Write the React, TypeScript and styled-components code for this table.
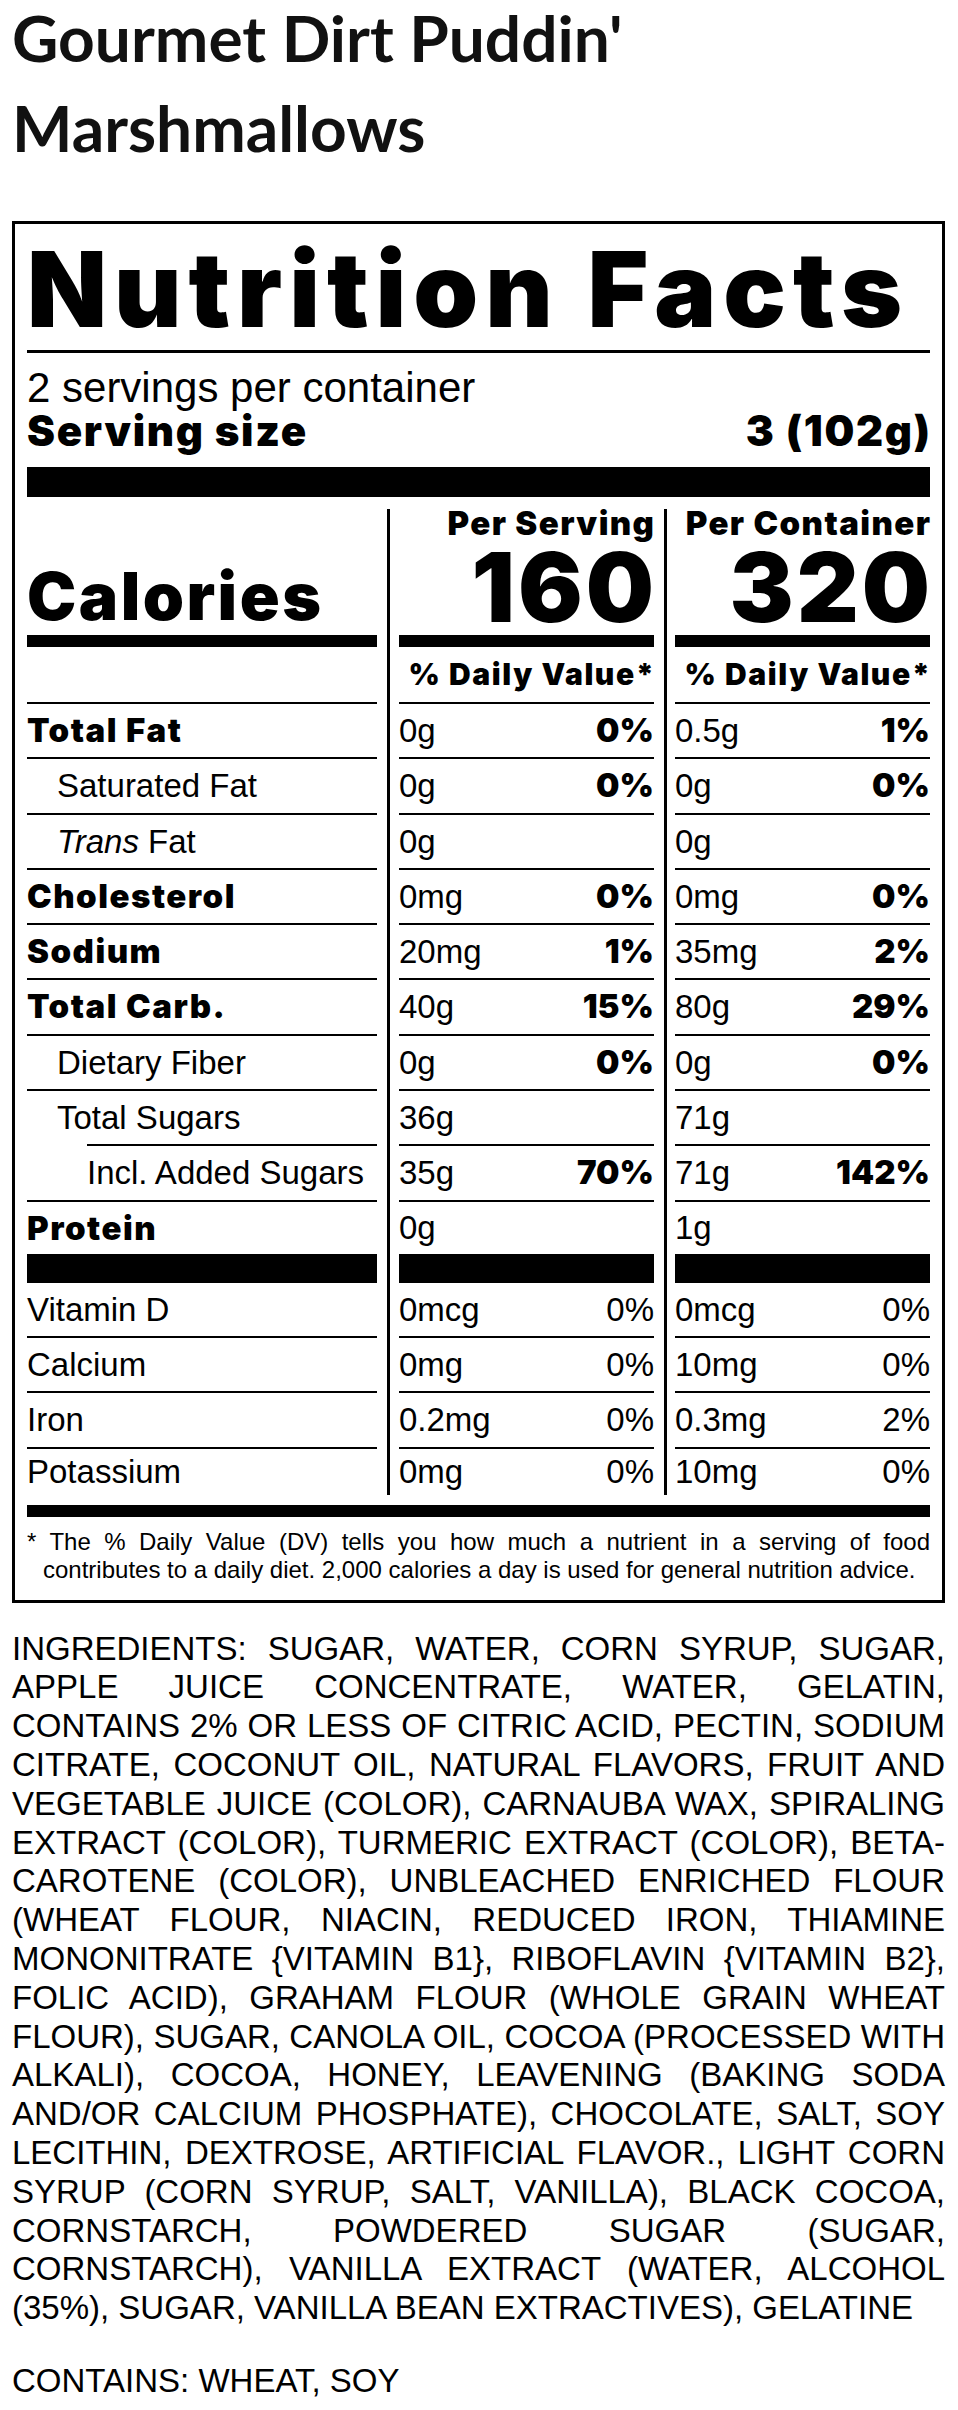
import React from 'react';
import styled, { createGlobalStyle } from 'styled-components';

const HEAVY = `"Inter", "Roboto", "Liberation Sans", Arial, sans-serif`;
const REGULAR = `"Liberation Sans", Arial, Helvetica, sans-serif`;

const GlobalStyle = createGlobalStyle`
  html, body { margin: 0; padding: 0; background: #fff; }
  body { font-family: ${REGULAR}; color: #000; }
`;

const Page = styled.main`
  padding: 0 13px 0 12px;
`;

const Title = styled.h1`
  margin: -7px 0 48px;
  font-family: Lato, "Liberation Sans", sans-serif;
  font-weight: 700;
  font-size: 64px;
  line-height: 90px;
  color: #111;
`;

const LabelBox = styled.section`
  border: 3px solid #000;
  padding: 0 12px 16px;
`;

const Heading = styled.h2`
  margin: 0;
  padding-top: 4px;
  font-family: ${HEAVY};
  font-weight: 900;
  font-size: 104px;
  line-height: 122px;
  letter-spacing: 7px;
  white-space: nowrap;
  border-bottom: 3px solid #000;
`;

const Servings = styled.p`
  margin: 14px 0 0;
  font-size: 42px;
  line-height: 42px;
`;

const ServingSize = styled.div`
  display: flex;
  justify-content: space-between;
  font-family: ${HEAVY};
  font-weight: 900;
  font-size: 42px;
  line-height: 44px;
  letter-spacing: 1.7px;
  margin-right: -1.7px;
`;

const Bar = styled.div<{ $h: number; $mt?: number }>`
  height: ${(p) => p.$h}px;
  margin-top: ${(p) => p.$mt ?? 0}px;
  background: #000;
`;

const Table = styled.div`
  margin-top: 12px;
`;

const Row = styled.div`
  display: grid;
  grid-template-columns: 360px 277px 1fr;
`;

const Cell = styled.div<{ $col: 0 | 1 | 2 }>`
  display: flex;
  flex-direction: column;
  padding: ${(p) => (p.$col === 0 ? '0 10px 0 0' : p.$col === 1 ? '0 10px 0 9px' : '0 0 0 8px')};
  border-left: ${(p) => (p.$col === 0 ? 'none' : '3px solid #000')};
`;

const HeaderCell = styled(Cell)`
  height: 138px;
  justify-content: flex-end;
`;

const Spacer = styled.div`
  flex: 1;
`;

const PerLabel = styled.div`
  font-family: ${HEAVY};
  font-weight: 900;
  font-size: 33px;
  line-height: 28px;
  letter-spacing: 1.4px;
  margin-right: -1.4px;
  text-align: right;
  white-space: nowrap;
`;

const BigNumber = styled.div`
  font-family: ${HEAVY};
  font-weight: 900;
  font-size: 96px;
  line-height: 96px;
  letter-spacing: 3px;
  margin-right: -3px;
  text-align: right;
`;

const CaloriesLabel = styled.div`
  font-family: ${HEAVY};
  font-weight: 900;
  font-size: 66px;
  line-height: 78px;
  letter-spacing: 2.5px;
`;

const CellBody = styled.div<{ $h: number; $indent?: number }>`
  height: ${(p) => p.$h}px;
  display: flex;
  align-items: center;
  justify-content: space-between;
  padding-left: ${(p) => p.$indent ?? 0}px;
  line-height: ${(p) => p.$h}px;
  white-space: nowrap;
`;

const DVText = styled.span`
  margin-left: auto;
  margin-right: -1.6px;
  font-family: ${HEAVY};
  font-weight: 900;
  font-size: 30px;
  letter-spacing: 1.6px;
`;

const Text = styled.span<{ $bold?: boolean; $spaced?: boolean }>`
  font-family: ${(p) => (p.$bold ? HEAVY : REGULAR)};
  font-weight: ${(p) => (p.$bold ? 900 : 400)};
  font-size: 33px;
  letter-spacing: ${(p) => (p.$spaced ? '1.5px' : 'normal')};
`;

const Rule = styled.div<{ $indent?: number }>`
  height: 2px;
  margin-left: ${(p) => p.$indent ?? 0}px;
  background: #000;
`;

const Footnote = styled.p`
  margin: 11px 0 0;
  padding-left: 16px;
  text-indent: -16px;
  font-size: 24px;
  line-height: 28px;
  text-align: justify;
`;

const Ingredients = styled.p`
  margin: 27px 0 0;
  font-size: 33px;
  line-height: 38.8px;
  text-align: justify;
`;

const Contains = styled.p`
  margin: 34px 0 0;
  font-size: 33px;
  line-height: 38.8px;
`;

type Amount = [string, string];
type Nutrient = {
  label: React.ReactNode;
  bold?: boolean;
  indent?: number;
  lineIndent?: number;
  s: Amount;
  c: Amount;
  h?: number;
  noLine?: boolean;
};

const macros: Nutrient[] = [
  { label: 'Total Fat', bold: true, s: ['0g', '0%'], c: ['0.5g', '1%'] },
  { label: 'Saturated Fat', indent: 30, s: ['0g', '0%'], c: ['0g', '0%'] },
  { label: <><i>Trans</i> Fat</>, indent: 30, s: ['0g', ''], c: ['0g', ''] },
  { label: 'Cholesterol', bold: true, s: ['0mg', '0%'], c: ['0mg', '0%'] },
  { label: 'Sodium', bold: true, s: ['20mg', '1%'], c: ['35mg', '2%'] },
  { label: 'Total Carb.', bold: true, s: ['40g', '15%'], c: ['80g', '29%'] },
  { label: 'Dietary Fiber', indent: 30, s: ['0g', '0%'], c: ['0g', '0%'] },
  { label: 'Total Sugars', indent: 30, lineIndent: 60, s: ['36g', ''], c: ['71g', ''] },
  { label: 'Incl. Added Sugars', indent: 60, s: ['35g', '70%'], c: ['71g', '142%'] },
  { label: 'Protein', bold: true, s: ['0g', ''], c: ['1g', ''], h: 52, noLine: true },
];

const vitamins: Nutrient[] = [
  { label: 'Vitamin D', s: ['0mcg', '0%'], c: ['0mcg', '0%'] },
  { label: 'Calcium', s: ['0mg', '0%'], c: ['10mg', '0%'] },
  { label: 'Iron', s: ['0.2mg', '0%'], c: ['0.3mg', '2%'] },
  { label: 'Potassium', s: ['0mg', '0%'], c: ['10mg', '0%'], h: 46, noLine: true },
];

const INGREDIENTS =
  'INGREDIENTS: SUGAR, WATER, CORN SYRUP, SUGAR, APPLE JUICE CONCENTRATE, WATER, GELATIN, CONTAINS 2% OR ' +
  'LESS OF CITRIC ACID, PECTIN, SODIUM CITRATE, COCONUT OIL, NATURAL FLAVORS, FRUIT AND VEGETABLE JUICE ' +
  '(COLOR), CARNAUBA WAX, SPIRALING EXTRACT (COLOR), TURMERIC EXTRACT (COLOR), BETA-CAROTENE (COLOR), ' +
  'UNBLEACHED ENRICHED FLOUR (WHEAT FLOUR, NIACIN, REDUCED IRON, THIAMINE MONONITRATE {VITAMIN B1}, ' +
  'RIBOFLAVIN {VITAMIN B2}, FOLIC ACID), GRAHAM FLOUR (WHOLE GRAIN WHEAT FLOUR), SUGAR, CANOLA OIL, ' +
  'COCOA (PROCESSED WITH ALKALI), COCOA, HONEY, LEAVENING (BAKING SODA AND/OR CALCIUM PHOSPHATE), ' +
  'CHOCOLATE, SALT, SOY LECITHIN, DEXTROSE, ARTIFICIAL FLAVOR., LIGHT CORN SYRUP (CORN SYRUP, SALT, ' +
  'VANILLA), BLACK COCOA, CORNSTARCH, POWDERED SUGAR (SUGAR, CORNSTARCH), VANILLA EXTRACT (WATER, ALCOHOL ' +
  '(35%), SUGAR, VANILLA BEAN EXTRACTIVES), GELATINE';

const FOOTNOTE =
  '* The % Daily Value (DV) tells you how much a nutrient in a serving of food contributes to a daily ' +
  'diet. 2,000 calories a day is used for general nutrition advice.';

function NutrientRow({ n, boldPct }: { n: Nutrient; boldPct: boolean }) {
  const h = n.h ?? 53.3;
  return (
    <Row>
      <Cell $col={0}>
        <CellBody $h={h} $indent={n.indent}>
          <Text $bold={n.bold} $spaced={n.bold}>
            {n.label}
          </Text>
        </CellBody>
        {!n.noLine && <Rule $indent={n.lineIndent} />}
      </Cell>
      {[n.s, n.c].map((a, i) => (
        <Cell $col={(i + 1) as 1 | 2} key={i}>
          <CellBody $h={h}>
            <Text>{a[0]}</Text>
            <Text $bold={boldPct}>{a[1]}</Text>
          </CellBody>
          {!n.noLine && <Rule />}
        </Cell>
      ))}
    </Row>
  );
}

function ColumnBars({ h }: { h: number }) {
  return (
    <Row>
      {[0, 1, 2].map((c) => (
        <Cell $col={c as 0 | 1 | 2} key={c}>
          <Bar $h={h} />
        </Cell>
      ))}
    </Row>
  );
}

export default function App() {
  return (
    <Page>
      <GlobalStyle />
      <Title>
        Gourmet Dirt Puddin'
        <br />
        Marshmallows
      </Title>

      <LabelBox>
        <Heading>Nutrition Facts</Heading>
        <Servings>2 servings per container</Servings>
        <ServingSize>
          <span>Serving size</span>
          <span>3 (102g)</span>
        </ServingSize>
        <Bar $h={30} $mt={14} />

        <Table>
          <Row>
            <HeaderCell $col={0}>
              <CaloriesLabel>Calories</CaloriesLabel>
              <Bar $h={12} />
            </HeaderCell>
            <HeaderCell $col={1}>
              <PerLabel>Per Serving</PerLabel>
              <Spacer />
              <BigNumber>160</BigNumber>
              <Bar $h={12} />
            </HeaderCell>
            <HeaderCell $col={2}>
              <PerLabel>Per Container</PerLabel>
              <Spacer />
              <BigNumber>320</BigNumber>
              <Bar $h={12} />
            </HeaderCell>
          </Row>

          <Row>
            <Cell $col={0}>
              <CellBody $h={55} />
              <Rule />
            </Cell>
            <Cell $col={1}>
              <CellBody $h={55}>
                <DVText>% Daily Value*</DVText>
              </CellBody>
              <Rule />
            </Cell>
            <Cell $col={2}>
              <CellBody $h={55}>
                <DVText>% Daily Value*</DVText>
              </CellBody>
              <Rule />
            </Cell>
          </Row>

          {macros.map((n, i) => (
            <NutrientRow n={n} boldPct key={i} />
          ))}

          <ColumnBars h={29} />

          {vitamins.map((n, i) => (
            <NutrientRow n={n} boldPct={false} key={i} />
          ))}
        </Table>

        <Bar $h={12} $mt={10} />
        <Footnote>{FOOTNOTE}</Footnote>
      </LabelBox>

      <Ingredients>{INGREDIENTS}</Ingredients>
      <Contains>CONTAINS: WHEAT, SOY</Contains>
    </Page>
  );
}
